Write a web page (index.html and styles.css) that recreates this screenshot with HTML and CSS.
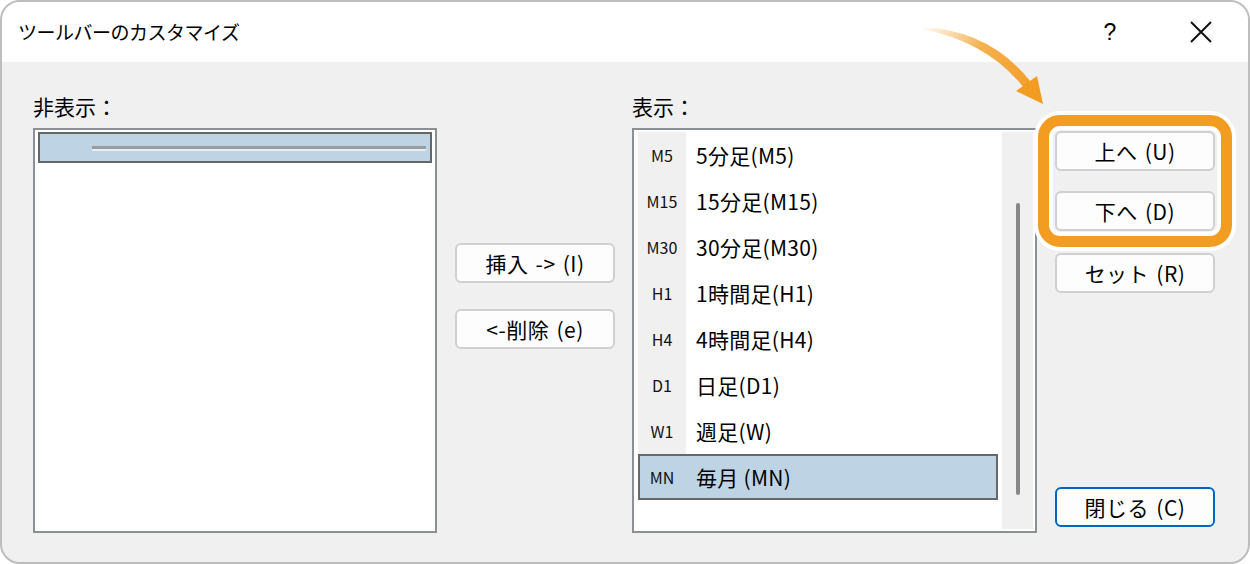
FILE: index.html
```html
<!DOCTYPE html>
<html lang="ja">

<head>
    <meta charset="UTF-8">
    <title>ツールバーのカスタマイズ</title>
    <link rel="stylesheet" href="styles.css">
</head>

<body>

    <div class="window">
        <div class="titlebar">
            <div class="title">ツールバーのカスタマイズ</div>
            <div class="controls">
                <div class="ctl help">?</div>
                <div class="ctl close">
                    <svg width="22" height="22" viewBox="0 0 22 22">
                        <path d="M1 1 L21 21 M21 1 L1 21" stroke="#111" stroke-width="2" fill="none" />
                    </svg>
                </div>
            </div>
        </div>

        <div class="content">
            <div class="col-list">
                <div class="label">非表示：</div>
                <div class="list list-left">
                    <div class="sep-item">
                        <div class="sep-line"></div>
                    </div>
                </div>
            </div>

            <div class="col-mid">
                <button class="btn">挿入 -&gt; (I)</button>
                <button class="btn">&lt;-削除 (e)</button>
            </div>

            <div class="col-list col-list-r">
                <div class="label">表示：</div>
                <div class="list list-right">
                    <div class="rows">
                        <div class="row"><span class="ic">M5</span><span class="tx">5分足(M5)</span></div>
                        <div class="row"><span class="ic">M15</span><span class="tx">15分足(M15)</span></div>
                        <div class="row"><span class="ic">M30</span><span class="tx">30分足(M30)</span></div>
                        <div class="row"><span class="ic">H1</span><span class="tx">1時間足(H1)</span></div>
                        <div class="row"><span class="ic">H4</span><span class="tx">4時間足(H4)</span></div>
                        <div class="row"><span class="ic">D1</span><span class="tx">日足(D1)</span></div>
                        <div class="row"><span class="ic">W1</span><span class="tx">週足(W)</span></div>
                        <div class="row sel"><span class="ic">MN</span><span class="tx">毎月 (MN)</span></div>
                    </div>
                    <div class="scroll">
                        <div class="thumb"></div>
                    </div>
                </div>
            </div>

            <div class="col-btns">
                <button class="btn">上へ (U)</button>
                <button class="btn btn-down">下へ (D)</button>
                <button class="btn btn-set">セット (R)</button>
                <button class="btn btn-close">閉じる (C)</button>
            </div>
        </div>

        <!-- callout over the up/down buttons -->
        <div class="highlight"></div>
        <svg class="arrow" width="1250" height="564" viewBox="0 0 1250 564">
            <defs>
                <linearGradient id="fade" x1="920" y1="28" x2="1040" y2="100" gradientUnits="userSpaceOnUse">
                    <stop offset="0" stop-color="#f39c22" stop-opacity="0" />
                    <stop offset="0.45" stop-color="#f39c22" stop-opacity="0.8" />
                    <stop offset="1" stop-color="#f39c22" />
                </linearGradient>
            </defs>
            <path d="M922 27 Q990 30 1031 82 L1024 88 Q988 42 922 29 Z" fill="url(#fade)" />
            <polygon points="1016,91 1043,104 1037,76" fill="#f39c22" />
        </svg>
    </div>

</body>

</html>
```

FILE: styles.css
```css
body {
    margin: 0;
    background-color: #fff;
    font-family: "Noto Sans CJK JP", "Noto Sans", sans-serif;
    color: #000;
}

.window {
    position: relative;
    width: 1250px;
    height: 564px;
    box-sizing: border-box;
    border: 2px solid #bdbdbd;
    border-radius: 20px;
    background-color: #f0f0f0;
    overflow: hidden;
}

.titlebar {
    height: 60px;
    background-color: #fff;
    display: flex;
    align-items: center;
    padding-left: 16px;
}

.title {
    font-size: 19px;
    letter-spacing: -0.5px;
    line-height: 24px;
}

.controls {
    margin-left: auto;
    margin-right: 24px;
    display: flex;
    gap: 45px;
}

.ctl {
    width: 46px;
    height: 40px;
    display: flex;
    align-items: center;
    justify-content: center;
}

.help {
    font-family: "Liberation Sans", sans-serif;
    font-size: 23px;
}

.content {
    display: flex;
    padding: 29px 0 0 31px;
}

.col-list {
    width: 404px;
}

.col-list-r {
    width: 405px;
    margin-left: 17px;
}

.label {
    font-size: 21px;
    line-height: 30px;
    height: 30px;
    margin-bottom: 7px;
}

.list {
    height: 405px;
    box-sizing: border-box;
    border: 2px solid #8b9097;
    background-color: #fff;
}

.list-left {
    padding: 2px 3px;
}

.sep-item {
    height: 31px;
    box-sizing: border-box;
    border: 2px solid #666;
    background-color: #bed3e4;
    padding: 12px 4px 0 52px;
}

.sep-line {
    height: 3px;
    background-color: #9b9b9b;
    border-bottom: 2px solid #e9eef3;
}

.col-mid {
    width: 160px;
    margin-left: 18px;
    padding-top: 152px;
    display: flex;
    flex-direction: column;
}

.btn {
    width: 160px;
    height: 40px;
    box-sizing: border-box;
    border: 2px solid #d0d0d0;
    border-radius: 6px;
    background-color: #fdfdfd;
    font-family: "Noto Sans CJK JP", "Noto Sans", sans-serif;
    font-size: 21px;
    letter-spacing: 0.5px;
    word-spacing: 2px;
    line-height: 24px;
    color: #000;
    padding: 0;
}

.col-mid .btn + .btn {
    margin-top: 26px;
}

.list-right {
    display: flex;
    padding: 2px 2px 2px 4px;
}

.rows {
    flex: 1;
    margin-right: 4px;
}

.row {
    display: flex;
    height: 46px;
}

.ic {
    width: 48px;
    background-color: #f0f0f0;
    display: flex;
    align-items: center;
    justify-content: center;
    font-size: 16px;
    color: #111;
}

.tx {
    display: flex;
    align-items: center;
    padding-left: 10px;
    font-size: 21px;
    letter-spacing: 0.3px;
}

.row.sel {
    background-color: #bed3e4;
    box-shadow: inset 0 0 0 2px #686868;
}

.row.sel .ic {
    background-color: transparent;
}

.scroll {
    position: relative;
    width: 31px;
    background-color: #f0f0f0;
}

.thumb {
    position: absolute;
    left: 14px;
    top: 71px;
    width: 4px;
    height: 292px;
    border-radius: 2px;
    background-color: #878787;
}

.col-btns {
    width: 160px;
    margin-left: 18px;
    padding-top: 40px;
    display: flex;
    flex-direction: column;
}

.btn-down {
    margin-top: 20px;
}

.btn-set {
    margin-top: 22px;
}

.btn-close {
    margin-top: 194px;
    border-color: #0067c0;
}

.highlight {
    position: absolute;
    left: 1036px;
    top: 113px;
    width: 194px;
    height: 132px;
    box-sizing: border-box;
    border: 11px solid #f39c22;
    border-radius: 22px;
    box-shadow: 0 0 0 4px #fff, inset 0 0 0 4px #fff;
    pointer-events: none;
}

.arrow {
    position: absolute;
    left: -2px;
    top: -2px;
    pointer-events: none;
}
```
